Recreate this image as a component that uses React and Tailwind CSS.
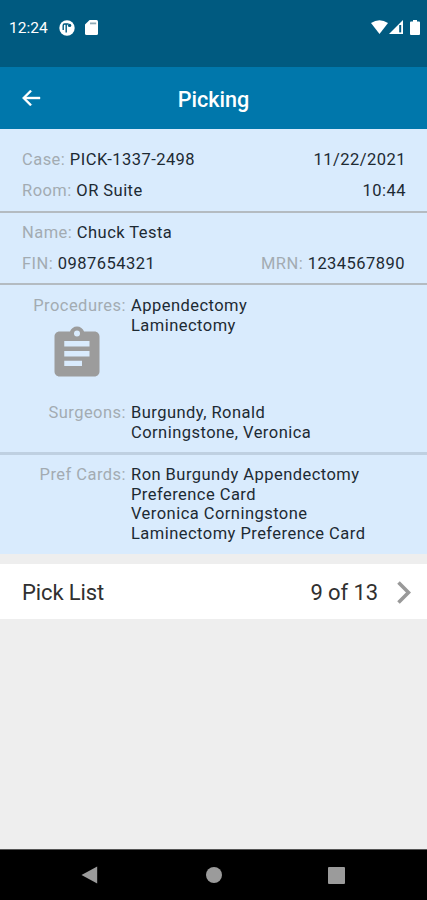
import React from 'react';

const caseInfo = {
  id: 'PICK-1337-2498',
  room: 'OR Suite',
  date: '11/22/2021',
  time: '10:44',
  name: 'Chuck Testa',
  fin: '0987654321',
  mrn: '1234567890',
  procedures: ['Appendectomy', 'Laminectomy'],
  surgeons: ['Burgundy, Ronald', 'Corningstone, Veronica'],
  prefCards: [
    'Ron Burgundy Appendectomy Preference Card',
    'Veronica Corningstone Laminectomy Preference Card',
  ],
};

const Field = ({ label, value }) => (
  <p className="whitespace-nowrap">
    <span className="text-[#a3abb2]">{label}:</span> {value}
  </p>
);

const ListField = ({ label, items, children }) => (
  <div className="flex">
    <div className="w-[126px] shrink-0 text-right text-[#a3abb2]">
      {label}:
      {children}
    </div>
    <ul className="ml-[5px] w-[250px]">
      {items.map((item) => (
        <li key={item}>{item}</li>
      ))}
    </ul>
  </div>
);

const StatusBar = () => (
  <div className="flex h-[67px] items-start justify-between bg-[#005a80] pt-[17px] pl-[9px] pr-[7px] text-white">
    <div className="flex h-[21px] items-center">
      <span className="w-[50px] pt-px text-[15.5px] leading-[21px]">12:24</span>
      <svg className="h-4 w-4" viewBox="0 0 16 16">
        <circle cx="8" cy="8" r="7.7" fill="#fff" />
        <path d="M4.2 10V5.4Q4.2 4 5.6 4H9.6M7.2 4.5V12.4" fill="none" stroke="#005a80" strokeWidth="1.4" />
        <circle cx="10.6" cy="5.4" r="1.7" fill="#005a80" />
      </svg>
      <svg className="ml-[10px] h-[15px] w-[13px]" viewBox="0 0 13 15">
        <path d="M4.6 0H11.5Q13 0 13 1.5V13.5Q13 15 11.5 15H1.5Q0 15 0 13.5V4.6Z" fill="#fff" />
        <path d="M5 3.4H11.2" stroke="#8fa9b5" strokeWidth="1.8" />
      </svg>
    </div>
    <div className="flex h-5 items-center">
      <svg className="h-[14px] w-[17px]" viewBox="0 0 17 14">
        <path d="M0 3.1Q8.5 -2.8 17 3.1L8.5 14Z" fill="#fff" />
      </svg>
      <svg className="ml-px h-[14px] w-[14px]" viewBox="0 0 14 14">
        <path d="M14 0V14H0Z" fill="#fff" />
        <path d="M11.2 5V12.4" stroke="#005a80" strokeWidth="2" />
      </svg>
      <svg className="ml-[7px] h-[15px] w-[10px]" viewBox="0 0 10 15">
        <path d="M3 0H7V1.6H9Q10 1.6 10 2.6V14Q10 15 9 15H1Q0 15 0 14V2.6Q0 1.6 1 1.6H3Z" fill="#fff" />
      </svg>
    </div>
  </div>
);

const Header = () => (
  <header className="grid h-[62px] grid-cols-3 items-center bg-[#0077ab] px-[19px] text-white">
    <button className="justify-self-start" aria-label="Back">
      <svg className="h-6 w-6" viewBox="0 0 24 24" fill="currentColor">
        <path d="M21 11H7.1l5.6-5.6L11.3 4l-8 8 8 8 1.4-1.4L7.1 13H21v-2z" stroke="currentColor" strokeWidth="0.4" />
      </svg>
    </button>
    <h1 className="pt-[3px] text-center text-[21.6px] font-medium leading-7">Picking</h1>
  </header>
);

const NavBar = () => (
  <nav className="flex h-[51px] items-center justify-between border-t border-[#555] bg-black pl-[81px] pr-[82px]">
    <svg className="h-[18px] w-[17px]" viewBox="0 0 17 18" fill="#9b9b9b">
      <path d="M0.5 9L16.2 0.4V17.6Z" />
    </svg>
    <div className="ml-px h-4 w-4 rounded-full bg-[#9b9b9b]" />
    <div className="h-[17px] w-[17px] rounded-[1px] bg-[#9b9b9b]" />
  </nav>
);

const App = () => {
  return (
    <div className="flex h-[900px] w-[427px] flex-col overflow-hidden bg-[#eeeeee] font-[Roboto,sans-serif] text-[#1d2a33]">
      <StatusBar />
      <Header />

      <main className="flex-1 text-[16.5px] leading-[19.7px] tracking-[0.46px]">
        <div className="h-[425px] bg-[#d9ebfd]">
          <section className="flex h-[84px] flex-col gap-[11px] border-b-2 border-[#b4bbc1] pt-[21px] pl-[22px] pr-[21px]">
            <div className="flex justify-between">
              <Field label="Case" value={caseInfo.id} />
              <p>{caseInfo.date}</p>
            </div>
            <div className="flex justify-between">
              <Field label="Room" value={caseInfo.room} />
              <p>{caseInfo.time}</p>
            </div>
          </section>

          <section className="flex h-[72px] flex-col gap-[11px] border-b-2 border-[#b4bbc1] pt-[10px] pl-[22px] pr-[22px]">
            <Field label="Name" value={caseInfo.name} />
            <div className="flex justify-between">
              <Field label="FIN" value={caseInfo.fin} />
              <Field label="MRN" value={caseInfo.mrn} />
            </div>
          </section>

          <section className="flex h-[170px] flex-col border-b-[3px] border-[#bfd0e1] pt-[11px]">
            <div className="h-[107px]">
              <ListField label="Procedures" items={caseInfo.procedures}>
                <svg className="mt-[8px] ml-[47px] h-[60px] w-[60px]" viewBox="0 0 24 24" fill="#9c9c9c" fillRule="evenodd">
                  <path d="M19 3h-4.180C14.4 1.84 13.3 1 12 1c-1.3 0-2.4.84-2.82 2H5c-1.1 0-2 .9-2 2v14c0 1.1.9 2 2 2h14c1.1 0 2-.9 2-2V5c0-1.1-.9-2-2-2zM12 2.6a1.2 1.2 0 1 0 0 2.4 1.2 1.2 0 1 0 0-2.4zM6.9 6.8H17V9H6.9zM6.9 10.8H17V13H6.9zM6.9 14.7H14V16.8H6.9z" />
                </svg>
              </ListField>
            </div>
            <ListField label="Surgeons" items={caseInfo.surgeons} />
          </section>

          <section className="pt-[10px]">
            <ListField label="Pref Cards" items={caseInfo.prefCards} />
          </section>
        </div>

        <div className="mt-[10px] flex h-[55px] items-center bg-white pl-[22px] pr-[16px] text-[22px] leading-7 tracking-[-0.1px] text-[#303030]">
          <span className="flex-1 pt-[3px]">Pick List</span>
          <span className="pt-[3px]">9 of 13</span>
          <svg className="ml-[19px] mt-px h-[23px] w-[14px]" viewBox="0 0 14 23">
            <path d="M1.5 1.5L11.5 11.5L1.5 21.5" fill="none" stroke="#999" strokeWidth="3.6" />
          </svg>
        </div>
      </main>

      <NavBar />
    </div>
  );
};

export default App;
